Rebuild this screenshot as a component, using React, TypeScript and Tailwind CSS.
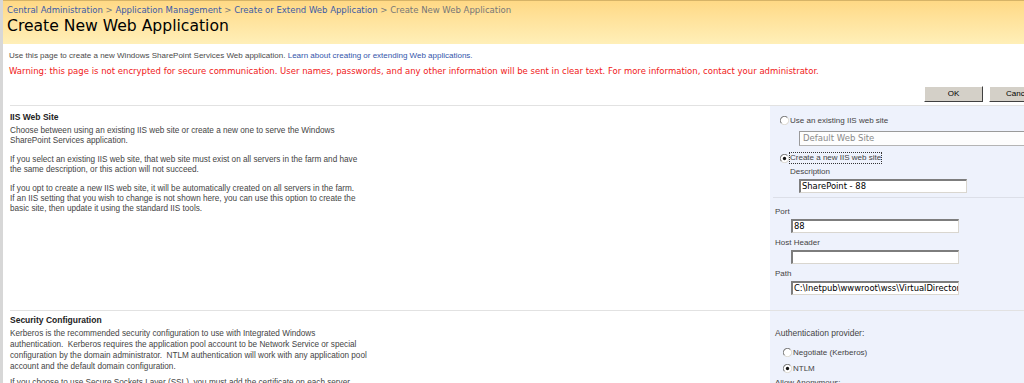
import React from "react";

const verdana = "font-['DejaVu_Sans',Verdana,sans-serif]";
const tahoma = "font-['Liberation_Sans',Arial,sans-serif]";

function Radio({ checked }: { checked?: boolean }) {
  return (
    <svg width="9" height="9" viewBox="0 0 12 12" className="shrink-0">
      <circle cx="6" cy="6" r="5.5" fill="#fff" />
      <path d="M2.1 9.9 A5.5 5.5 0 0 1 9.9 2.1" fill="none" stroke="#7c7c7c" strokeWidth="1.4" />
      <path d="M9.9 2.1 A5.5 5.5 0 0 1 2.1 9.9" fill="none" stroke="#dedbd4" strokeWidth="1.4" />
      {checked && <circle cx="6" cy="6" r="2.2" fill="#111" />}
    </svg>
  );
}

function TextBox({ value, className = "" }: { value?: string; className?: string }) {
  return (
    <div
      className={`h-[14px] w-[168px] overflow-hidden whitespace-nowrap border-t-2 border-l-2 border-b border-r border-t-[#7d7d7d] border-l-[#7d7d7d] border-b-[#d9d6cf] border-r-[#d9d6cf] bg-white pl-[1px] text-[8.4px] leading-[11px] text-black ${verdana} ${className}`}
    >
      {value}
    </div>
  );
}

function Button({ label }: { label: string }) {
  return (
    <div
      className={`flex h-[16px] w-[59px] shrink-0 items-center justify-center border border-t-white border-l-white border-b-[#404040] border-r-[#404040] bg-[#d4d0c8] text-[8px] text-black ${tahoma}`}
    >
      {label}
    </div>
  );
}

export default function App() {
  return (
    <div className="h-[383px] w-[1024px] overflow-hidden bg-white">
      <div className="flex min-h-[383px] w-[1060px]">
        <div className="w-[3px] shrink-0 bg-[#d7d7d7]" />
        <div className="flex-1">
          <header className="h-[44px] border-t border-[#d6b367] bg-linear-to-b from-[#ffd985] to-[#ffefb8] pl-[4px] pt-[4px]">
            <div className={`whitespace-nowrap text-[8.5px] leading-[11px] ${verdana}`}>
              <span className="text-[#3b5ba6]">Central Administration</span>
              <span className="text-[#777]"> &gt; </span>
              <span className="text-[#3b5ba6]">Application Management</span>
              <span className="text-[#777]"> &gt; </span>
              <span className="text-[#3b5ba6]">Create or Extend Web Application</span>
              <span className="text-[#777]"> &gt; Create New Web Application</span>
            </div>
            <h1 className={`mt-[1px] text-[15.6px] leading-[18px] text-black ${verdana}`}>Create New Web Application</h1>
          </header>

          <div className="pl-[6px] pt-[6px]">
            <p className={`text-[8px] leading-[11px] text-[#4a4a4a] ${tahoma}`}>
              Use this page to create a new Windows SharePoint Services Web application.{" "}
              <span className="text-[#3355aa]">Learn about creating or extending Web applications.</span>
            </p>
            <p className={`mt-[5px] whitespace-nowrap text-[8.5px] leading-[11px] text-[#f02020] ${verdana}`}>
              Warning: this page is not encrypted for secure communication. User names, passwords, and any other
              information will be sent in clear text. For more information, contact your administrator.
            </p>
          </div>

          <div className="mt-[9px] flex justify-end gap-[6px] pr-[12px]">
            <Button label="OK" />
            <Button label="Cancel" />
          </div>

          {/* IIS Web Site */}
          <section className="ml-[7px] mt-[3px] flex border-t border-[#e2e2e2]">
            <div className={`w-[760px] shrink-0 pt-[6px] text-[8.2px] text-[#444] ${tahoma}`}>
              <h2 className="text-[8.5px] font-bold leading-[11px] text-[#222]">IIS Web Site</h2>
              <div className="mt-[3px] leading-[10px]">
                <p>
                  Choose between using an existing IIS web site or create a new one to serve the Windows
                  <br />
                  SharePoint Services application.
                </p>
                <p className="mt-[9px]">
                  If you select an existing IIS web site, that web site must exist on all servers in the farm and have
                  <br />
                  the same description, or this action will not succeed.
                </p>
                <p className="mt-[9px]">
                  If you opt to create a new IIS web site, it will be automatically created on all servers in the farm.
                  <br />
                  If an IIS setting that you wish to change is not shown here, you can use this option to create the
                  <br />
                  basic site, then update it using the standard IIS tools.
                </p>
              </div>
            </div>
            <div className={`flex-1 bg-[#eef2fc] pb-[15px] pt-[9px] text-[8px] leading-[11px] text-[#444] ${tahoma}`}>
              <div className="flex items-center gap-[1px] pl-[10px]">
                <Radio />
                <span>Use an existing IIS web site</span>
              </div>
              <div
                className={`ml-[29px] mt-[5px] h-[15px] w-[260px] border border-[#b4b4b4] border-l-[#9a9a9a] border-t-[#9a9a9a] bg-[#fdfdfd] pl-[3px] text-[8.5px] leading-[13px] text-[#8a8a8a] ${verdana}`}
              >
                Default Web Site
              </div>
              <div className="mt-[7px] flex items-center gap-[1px] pl-[10px]">
                <Radio checked />
                <span className="outline-1 outline-dotted outline-[#333] leading-[10px]">Create a new IIS web site</span>
              </div>
              <div className="ml-[20px] mt-[3px]">Description</div>
              <TextBox value="SharePoint - 88" className="ml-[29px] mt-[2px]" />
              <div className="ml-[3px] mt-[4px] border-t border-[#dcdfe8] pl-[2px] pt-[8px]">
                <div>Port</div>
                <TextBox value="88" className="ml-[16px] mt-[2px]" />
                <div className="mt-[4px]">Host Header</div>
                <TextBox className="ml-[16px] mt-[2px]" />
                <div className="mt-[4px]">Path</div>
                <TextBox value="C:\Inetpub\wwwroot\wss\VirtualDirectories\88" className="ml-[16px] mt-[2px]" />
              </div>
            </div>
          </section>

          {/* Security Configuration */}
          <section className="ml-[7px] flex border-t border-[#e2e2e2]">
            <div className={`w-[760px] shrink-0 pt-[4px] text-[8.2px] text-[#444] ${tahoma}`}>
              <h2 className="text-[8.5px] font-bold leading-[11px] text-[#222]">Security Configuration</h2>
              <div className="mt-[2px] whitespace-pre leading-[11px]">
                <p>
                  {"Kerberos is the recommended security configuration to use with Integrated Windows\nauthentication.  Kerberos requires the application pool account to be Network Service or special\nconfiguration by the domain administrator.  NTLM authentication will work with any application pool\naccount and the default domain configuration."}
                </p>
                <p className="mt-[5px]">
                  If you choose to use Secure Sockets Layer (SSL), you must add the certificate on each server
                </p>
              </div>
            </div>
            <div className={`flex-1 bg-[#eef2fc] pl-[5px] pt-[17px] text-[8px] leading-[11px] text-[#444] ${tahoma}`}>
              <div className="text-[8.5px]">Authentication provider:</div>
              <div className="mt-[8px] flex items-center gap-[1px] pl-[8px]">
                <Radio />
                <span>Negotiate (Kerberos)</span>
              </div>
              <div className="mt-[5px] flex items-center gap-[1px] pl-[8px]">
                <Radio checked />
                <span>NTLM</span>
              </div>
              <div className="mt-[3px]">Allow Anonymous:</div>
            </div>
          </section>
        </div>
      </div>
    </div>
  );
}
